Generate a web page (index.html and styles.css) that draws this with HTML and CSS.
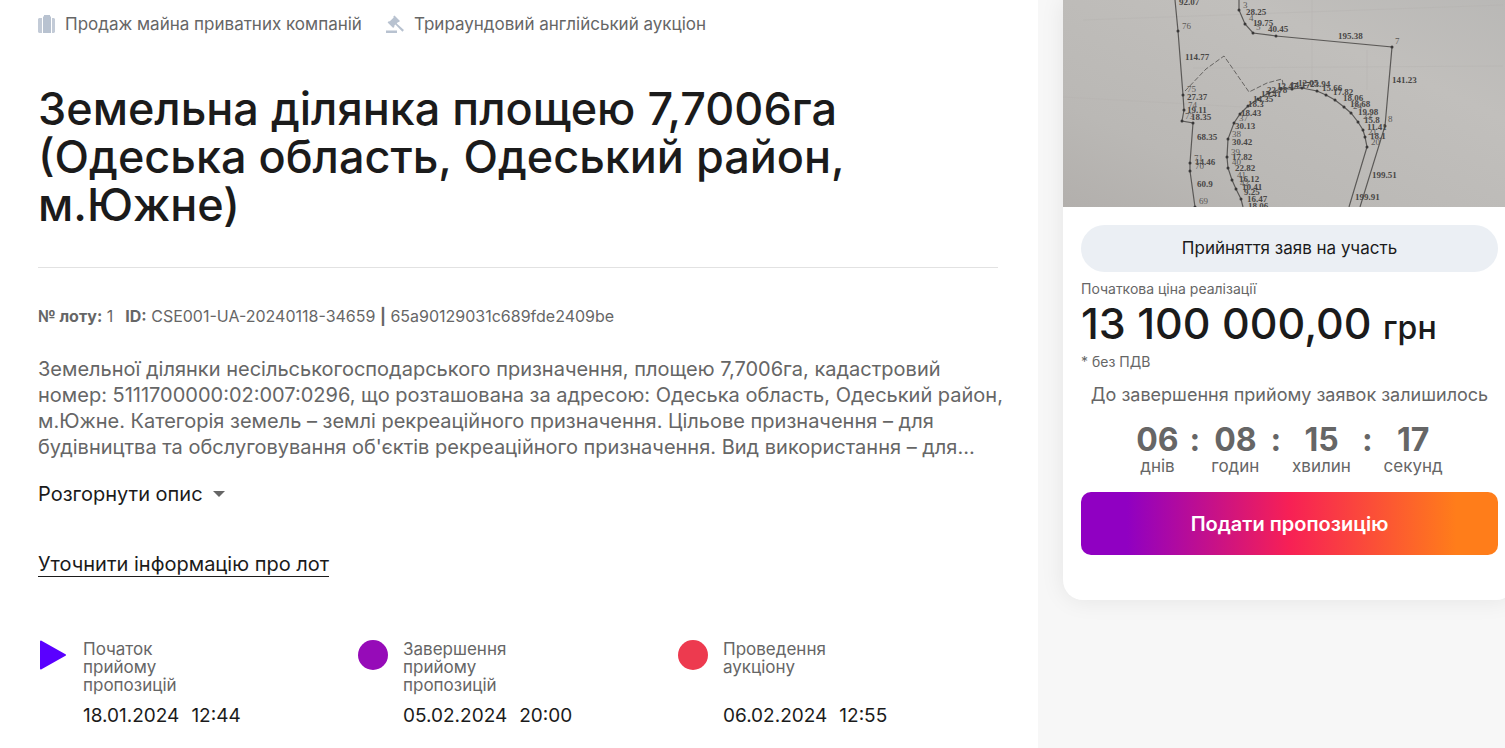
FILE: index.html
```html
<!DOCTYPE html>
<html lang="uk">
<head>
<meta charset="utf-8">
<meta name="viewport" content="width=device-width, initial-scale=1">
<title>Земельна ділянка площею 7,7006га</title>
<link rel="stylesheet" href="styles.css">
</head>
<body>
<div class="page">
  <main class="lot">
    <ul class="tags">
      <li class="tag">
        <svg class="tag-icon" width="17" height="18" viewBox="0 0 17 18" aria-hidden="true"><path d="M6 1V0h6v1l1 1v16H5V2z"/><path d="M1 3h3v15H1l-1-1V4zM14 3h2l1 1v13l-1 1h-2z" opacity=".85"/></svg>
        Продаж майна приватних компаній
      </li>
      <li class="tag">
        <svg class="tag-icon" width="18" height="18" viewBox="0 0 18 18" aria-hidden="true"><path d="M8.500 .5l5.500 5.500-1.400 1.300-.5-.4-1.400 1.500 7.300 6.600-1.600 1.700-7-7.100-1.300 1.300.4.600L7.200 13 1.600 7.400 3 6l.6.500L7.700 2.400 7.200 1.800zM0 15.500h11V18H0z"/></svg>
        Трираундовий англійський аукціон
      </li>
    </ul>

    <h1 class="title">Земельна ділянка площею 7,7006га<br>(Одеська область, Одеський район,<br>м.Южне)</h1>

    <p class="ids"><span><b>№ лоту:</b> 1</span><span><b>ID:</b> CSE001-UA-20240118-34659 <b>|</b> 65a90129031c689fde2409be</span></p>

    <p class="description">Земельної ділянки несільськогосподарського призначення, площею 7,7006га, кадастровий<br>номер: 5111700000:02:007:0296, що розташована за адресою: Одеська область, Одеський район,<br>м.Южне. Категорія земель – землі рекреаційного призначення. Цільове призначення – для<br>будівництва та обслуговування об'єктів рекреаційного призначення. Вид використання – для…</p>

    <button class="expand" type="button">Розгорнути опис
      <svg width="12" height="6" viewBox="0 0 12 6" aria-hidden="true"><path d="M0 0h12L6 6z" fill="#666"/></svg>
    </button>

    <a class="clarify" href="#">Уточнити інформацію про лот</a>

    <ol class="timeline">
      <li class="step">
        <svg class="step-icon" width="30" height="30" viewBox="0 0 30 30" aria-hidden="true"><path d="M3 1.500L27 15 3 28.500z" fill="#5a00ff" stroke="#5a00ff" stroke-width="2" stroke-linejoin="round"/></svg>
        <span class="step-name">Початок прийому пропозицій</span>
        <span class="step-date"><time>18.01.2024</time><time>12:44</time></span>
      </li>
      <li class="step">
        <svg class="step-icon" width="30" height="30" viewBox="0 0 30 30" aria-hidden="true"><circle cx="15" cy="15" r="15" fill="#960bb8"/></svg>
        <span class="step-name">Завершення прийому пропозицій</span>
        <span class="step-date"><time>05.02.2024</time><time>20:00</time></span>
      </li>
      <li class="step">
        <svg class="step-icon" width="30" height="30" viewBox="0 0 30 30" aria-hidden="true"><circle cx="15" cy="15" r="15" fill="#ed3a4f"/></svg>
        <span class="step-name">Проведення аукціону</span>
        <span class="step-date"><time>06.02.2024</time><time>12:55</time></span>
      </li>
    </ol>
  </main>

  <aside class="side">
    <div class="card">
      <svg class="plan" viewBox="0 0 453 207" role="img" aria-label="План ділянки">
        <defs>
          <linearGradient id="paper" x1="0" y1="1" x2="1" y2="0">
            <stop offset="0" stop-color="#b2afac"/><stop offset=".25" stop-color="#bab8b5"/><stop offset=".7" stop-color="#c1bfbc"/><stop offset="1" stop-color="#b9b8b6"/>
          </linearGradient>
        </defs>
        <rect width="453" height="207" fill="url(#paper)"/>
        <g fill="none" stroke="#b3b1ae" stroke-width="1"><path d="M0 97L180 107M20 20L440 5M249 0V90M304 50V90M130 68L440 66" opacity=".4"/></g>
        <g fill="none" stroke="#5b5957" stroke-width="1.200">
          <path d="M112 0L115 31 120 95 121 110 119 121 130 123 127 163V171L132 207"/>
          <path d="M176 0V10L182 24 190 33 213 36 329 47 322 126 297 207"/>
          <path d="M180 207L178 199 173 189 169 180 165 168 164 157 165 139 171 123 177 114 185 106 195 99 206 93 218 89 229 89 239 88 254 91 263 95 272 100 281 107 288 113 295 122 300 130 302 137 304 147 286 207"/>
          <path d="M122 91L143 69 161 56 186 92 204 83 219 79 221 88" stroke-dasharray="5 2" stroke-width=".9"/>
        </g>
        <g fill="none" stroke="#393838" stroke-width="3" stroke-linecap="round">
          <path d="M115 31h0M120 95h0M121 110h0M119 121h0M130 123h0M127 163h0M127 171h0M132 207h0M176 10h0M182 24h0M190 33h0M213 36h0M329 47h0M322 126h0M178 199h0M173 189h0M169 180h0M165 168h0M164 157h0M165 139h0M171 123h0M177 114h0M185 106h0M195 99h0M206 93h0M218 89h0M229 89h0M239 88h0M254 91h0M263 95h0M272 100h0M281 107h0M288 113h0M295 122h0M300 130h0M302 137h0M304 147h0"/>
        </g>
        <g class="plan-numbers">
          <text x="116" y="5">92.07</text><text x="122" y="60">114.77</text><text x="124" y="100">27.37</text><text x="124" y="113">19.11</text><text x="128" y="120">18.35</text><text x="134" y="140">68.35</text><text x="132" y="165">14.46</text><text x="134" y="187">60.9</text>
          <text x="183" y="15">28.25</text><text x="190" y="26">19.75</text><text x="205" y="32">40.45</text><text x="275" y="39">195.38</text><text x="329" y="83">141.23</text><text x="309" y="178">199.51</text><text x="292" y="200">199.91</text>
          <text x="185" y="107">18.3</text><text x="178" y="116">18.43</text><text x="172" y="129">30.13</text><text x="169" y="145">30.42</text><text x="169" y="160">17.82</text><text x="172" y="171">22.82</text><text x="176" y="182">16.12</text><text x="179" y="190">10.41</text><text x="181" y="195">9.25</text><text x="184" y="202">16.47</text><text x="185" y="209">18.06</text>
          <text x="190" y="102">14.35</text><text x="198" y="97">15.41</text><text x="204" y="93">22.78</text><text x="214" y="89">13.47</text><text x="227" y="88">14.17</text><text x="235" y="86">12.05</text><text x="247" y="87">23.94</text><text x="259" y="91">15.66</text><text x="270" y="95">17.82</text><text x="280" y="101">18.06</text><text x="287" y="107">18.68</text><text x="295" y="115">19.98</text><text x="301" y="123">15.8</text><text x="304" y="130">11.41</text><text x="307" y="139">18.1</text>
        </g>
        <g class="plan-points">
          <text x="119" y="29">76</text><text x="124" y="92">75</text><text x="125" y="108">74</text><text x="122" y="119">73</text><text x="131" y="161">71</text><text x="132" y="169">70</text><text x="136" y="204">69</text><text x="180" y="8">3</text><text x="186" y="21">4</text><text x="193" y="30">5</text><text x="332" y="44">7</text><text x="325" y="122">8</text><text x="169" y="137">38</text><text x="168" y="155">39</text><text x="169" y="165">40</text><text x="174" y="178">41</text><text x="177" y="186">42</text><text x="176" y="121">37</text><text x="308" y="145">20</text><text x="290" y="109">24</text><text x="300" y="119">23</text><text x="305" y="135">21</text>
        </g>
      </svg>
      <div class="card-body">
        <div class="status">Прийняття заяв на участь</div>
        <div class="price-label">Початкова ціна реалізації</div>
        <div class="price">13 100 000,00 <span class="currency">грн</span></div>
        <div class="vat">* без ПДВ</div>
        <div class="deadline">До завершення прийому заявок залишилось</div>
        <div class="countdown">
          <div class="unit"><b class="digits">06</b><span>днів</span></div>
          <b class="digits">:</b>
          <div class="unit"><b class="digits">08</b><span>годин</span></div>
          <b class="digits">:</b>
          <div class="unit"><b class="digits">15</b><span>хвилин</span></div>
          <b class="digits">:</b>
          <div class="unit"><b class="digits">17</b><span>секунд</span></div>
        </div>
        <button class="submit" type="button">Подати пропозицію</button>
      </div>
    </div>
  </aside>
</div>
</body>
</html>
```
FILE: styles.css
```css
* {
  box-sizing: border-box;
}

body {
  margin: 0;
  overflow-x: hidden;
  background: #f7f7f7;
  color: #1b1b1b;
  font-family: Inter, "Liberation Sans", sans-serif;
  font-size: 17px;
}

.page {
  display: grid;
  grid-template-columns: minmax(0, 1fr) 478px;
  min-height: 100vh;
  margin-right: -11px;
}

.lot {
  padding: 12px 40px 16px 38px;
  background: #fff;
}

.tags {
  display: flex;
  gap: 24px;
  margin: 0;
  padding: 0;
  list-style: none;
  color: #666;
  line-height: 24px;
}

.tag {
  display: flex;
  align-items: center;
  gap: 10px;
  white-space: nowrap;
}

.tag-icon {
  flex: none;
  fill: #b8c2d0;
}

.title {
  margin: 49px 0 0;
  padding-bottom: 38px;
  border-bottom: 1px solid #e2e2e2;
  font-size: 45px;
  font-weight: 500;
  line-height: 48px;
  white-space: nowrap;
}

.ids {
  display: flex;
  gap: 12px;
  margin: 36px 0 0;
  color: #666;
  font-size: 16px;
  line-height: 24px;
  white-space: nowrap;
}

.description {
  margin: 28px 0 0;
  color: #666;
  font-size: 20px;
  line-height: 26px;
  white-space: nowrap;
}

.expand {
  display: flex;
  align-items: center;
  gap: 10px;
  margin: 22px 0 0;
  padding: 0;
  border: 0;
  background: none;
  color: inherit;
  font: inherit;
  font-size: 20px;
  line-height: 24px;
}

.clarify {
  display: inline-block;
  margin-top: 46px;
  border-bottom: 1px solid #1b1b1b;
  color: inherit;
  font-size: 20px;
  line-height: 24px;
  text-decoration: none;
}

.timeline {
  display: grid;
  grid-template-columns: repeat(3, 1fr);
  margin: 63px 0 0;
  padding: 0;
  list-style: none;
}

.step {
  display: grid;
  grid-template-columns: 30px 1fr;
  grid-template-rows: 54px auto;
  gap: 10px 15px;
}

.step-name {
  max-width: 120px;
  color: #666;
  line-height: 18px;
}

.step-date {
  display: flex;
  grid-column: 2;
  gap: 12px;
  font-size: 19px;
  line-height: 24px;
}

.side {
  padding-left: 25px;
}

.card {
  overflow: hidden;
  border-radius: 0 0 20px 20px;
  background: #fff;
  box-shadow: 0 0 24px rgba(0, 0, 0, .08);
}

.plan {
  display: block;
  width: 100%;
}

.plan-numbers,
.plan-points {
  fill: #5b5957;
  font-family: "Liberation Serif", serif;
  font-size: 9px;
}

.plan-numbers {
  fill: #494746;
  font-weight: 700;
}

.card-body {
  padding: 18px 18px 45px;
}

.status {
  border-radius: 24px;
  background: #ebeff4;
  line-height: 47px;
  text-align: center;
}

.price-label,
.vat {
  color: #666;
  font-size: 14px;
  line-height: 20px;
}

.price-label {
  margin-top: 7px;
}

.price {
  font-size: 43px;
  font-weight: 500;
  line-height: 48px;
  white-space: nowrap;
}

.currency {
  font-size: 32px;
}

.deadline {
  margin-top: 10px;
  color: #666;
  font-size: 18px;
  line-height: 26px;
  text-align: center;
  white-space: nowrap;
}

.countdown {
  display: flex;
  justify-content: center;
  gap: 11px;
  margin-top: 15px;
  color: #666;
  line-height: 18px;
}

.unit {
  display: flex;
  flex-direction: column;
  align-items: center;
}

.digits {
  font-size: 32px;
  line-height: 34px;
}

.submit {
  display: block;
  width: 100%;
  height: 63px;
  margin-top: 17px;
  border: 0;
  border-radius: 10px;
  background: linear-gradient(90deg, #9000c2 11%, #f72055 50%, #ff7d1a 90%);
  color: #fff;
  font: inherit;
  font-size: 20px;
  font-weight: 600;
}
```
